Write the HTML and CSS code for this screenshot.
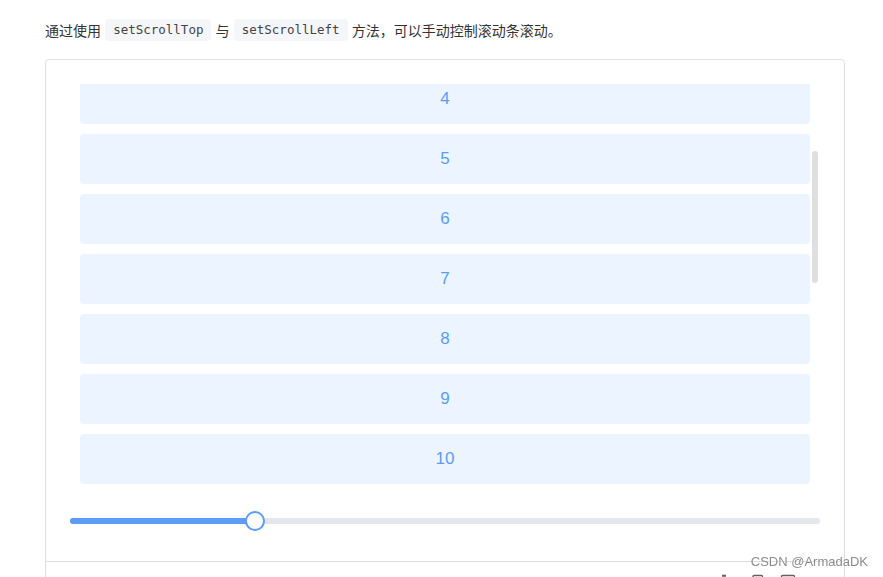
FILE: index.html
```html
<!DOCTYPE html>
<html lang="zh-CN">
<head>
    <meta charset="UTF-8">
    <meta name="viewport" content="width=device-width, initial-scale=1.0">
    <title>Scrollbar 手动滚动</title>
    <link rel="stylesheet" href="styles.css">
</head>
<body>
    <p class="desc">通过使用 <code>setScrollTop</code> 与 <code>setScrollLeft</code> 方法，可以手动控制滚动条滚动。</p>

    <div class="demo">
        <div class="demo-body">
            <div class="scrollbar">
                <div class="scrollbar-wrap" id="wrap">
                    <div class="scrollbar-view" id="view"></div>
                </div>
                <div class="scrollbar-bar">
                    <div class="scrollbar-thumb" id="thumb"></div>
                </div>
            </div>

            <div class="slider">
                <div class="slider-runway" id="runway">
                    <div class="slider-bar" id="sliderBar"></div>
                    <div class="slider-button" id="sliderBtn"></div>
                </div>
            </div>
        </div>

        <div class="demo-ops">
            <svg class="op-icon" viewBox="0 0 16 16"><path d="M6 1.5h4M7 1.5v4.5L3 13.5a1 1 0 0 0 .9 1.5h8.2a1 1 0 0 0 .9-1.5L9 6V1.5"/></svg>
            <svg class="op-icon" viewBox="0 0 16 16"><rect x="5" y="1.5" width="9.5" height="10" rx="1"/><path d="M11 11.5v2a1 1 0 0 1-1 1H2.5a1 1 0 0 1-1-1V6a1 1 0 0 1 1-1H5"/></svg>
            <svg class="op-icon" viewBox="0 0 16 16"><rect x="1.5" y="1.5" width="13" height="13" rx="1"/><path d="M6 6 4 8l2 2M10 6l2 2-2 2"/></svg>
        </div>
    </div>

    <div class="watermark">CSDN @ArmadaDK</div>

    <script>
        document.addEventListener('DOMContentLoaded', () => {
            const wrap = document.getElementById('wrap');
            const view = document.getElementById('view');
            const thumb = document.getElementById('thumb');
            const sliderBar = document.getElementById('sliderBar');
            const sliderBtn = document.getElementById('sliderBtn');

            for (let i = 1; i <= 20; i++) {
                const item = document.createElement('p');
                item.className = 'scrollbar-demo-item';
                item.textContent = i;
                view.appendChild(item);
            }

            const setScrollTop = (value) => {
                wrap.scrollTop = value;
                const max = wrap.scrollHeight - wrap.clientHeight;
                const ratio = wrap.clientHeight / wrap.scrollHeight;

                thumb.style.height = (wrap.clientHeight * ratio) + 'px';
                thumb.style.transform = 'translateY(' + (wrap.scrollTop * ratio) + 'px)';

                const percent = (wrap.scrollTop / max) * 100;
                sliderBar.style.width = percent + '%';
                sliderBtn.style.left = percent + '%';
            };

            setScrollTop(200);
        });
    </script>
</body>
</html>
```

FILE: styles.css
```css
body {
    margin: 0;
    padding: 0 0 0 45px;
    background: #fff;
    font-family: "Liberation Sans", "Noto Sans CJK SC", sans-serif;
    color: #333;
}
.desc {
    margin: 0 0 18px;
    padding-top: 19px;
    font-size: 14px;
    line-height: 22px;
    font-family: "Noto Sans CJK SC", sans-serif;
}
.desc code {
    display: inline-block;
    vertical-align: top;
    margin: 0 1px;
    padding: 0 8px;
    border-radius: 4px;
    background: #f5f6f9;
    color: #444;
    font-family: "DejaVu Sans Mono", monospace;
    font-size: 12.5px;
    line-height: 22px;
}
.demo {
    width: 800px;
    box-sizing: border-box;
    border: 1px solid #dcdfe6;
    border-radius: 4px;
}
.demo-body {
    padding: 24px;
}
.scrollbar {
    position: relative;
    height: 400px;
}
.scrollbar-wrap {
    height: 100%;
    overflow: auto;
    scrollbar-width: none;
}
.scrollbar-wrap::-webkit-scrollbar {
    display: none;
}
.scrollbar-view {
    display: flow-root;
}
.scrollbar-demo-item {
    display: flex;
    align-items: center;
    justify-content: center;
    height: 50px;
    margin: 10px;
    border-radius: 4px;
    background: #ecf5ff;
    color: #5a9cf8;
    font-size: 17px;
}
.scrollbar-bar {
    position: absolute;
    top: 1px;
    bottom: 2px;
    right: 2px;
    width: 6px;
}
.scrollbar-thumb {
    width: 100%;
    border-radius: 3px;
    background: #dedfe1;
}
.slider {
    display: flex;
    align-items: center;
    height: 32px;
    margin-top: 21px;
}
.slider-runway {
    position: relative;
    flex: 1;
    height: 6px;
    border-radius: 3px;
    background: #e4e7ed;
}
.slider-bar {
    height: 100%;
    border-radius: 3px;
    background: #5a9cf8;
}
.slider-button {
    position: absolute;
    top: 50%;
    width: 20px;
    height: 20px;
    box-sizing: border-box;
    border: 2px solid #5a9cf8;
    border-radius: 50%;
    background: #fff;
    transform: translate(-50%, -50%);
}
.demo-ops {
    display: flex;
    justify-content: flex-end;
    align-items: center;
    gap: 16px;
    height: 40px;
    padding-right: 48px;
    border-top: 1px solid #dcdfe6;
}
.op-icon {
    width: 16px;
    height: 16px;
    fill: none;
    stroke: #606266;
    stroke-width: 1.4;
}
.watermark {
    position: fixed;
    right: 15px;
    bottom: 7px;
    font-family: "Liberation Sans", sans-serif;
    font-size: 13px;
    line-height: 16px;
    color: #8c8c8c;
    text-shadow: 0 0 2px #fff;
}
```
